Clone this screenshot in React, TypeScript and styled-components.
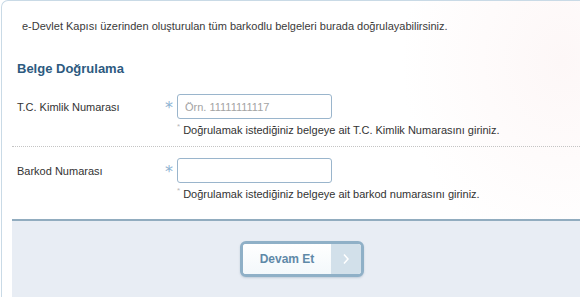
import React from "react";
import styled, { createGlobalStyle } from "styled-components";

const Global = createGlobalStyle`
  html, body { margin: 0; padding: 0; background: #fff; overflow: hidden; }
  body { font-family: Tahoma, "DejaVu Sans", "Liberation Sans", sans-serif; }
`;

const Panel = styled.div`
  margin-left: 1px;
  width: 579px;
  height: 297px;
  box-sizing: border-box;
  border: 1px solid #c9dae6;
  border-right: none;
  border-bottom: none;
  border-top-left-radius: 7px;
  background: radial-gradient(ellipse 160px 200px at 560px 60px, #fdf7f7 0%, rgba(255,255,255,0) 100%), #fff;
  display: flex;
  flex-direction: column;
`;

const Intro = styled.p`
  margin: 17px 0 0 20px;
  font-family: "Liberation Sans", Arial, sans-serif;
  font-size: 11px;
  line-height: 16px;
  color: #3a3a3a;
`;

const Title = styled.h2`
  margin: 26px 0 0 15px;
  font-family: "Liberation Sans", Arial, sans-serif;
  font-size: 13px;
  font-weight: bold;
  line-height: 18px;
  color: #2d5a7f;
`;

const Row = styled.div<{ $last?: boolean }>`
  display: grid;
  grid-template-columns: 148px 12px 160px;
  align-items: center;
  margin-left: 10px;
  padding: ${p => (p.$last ? "11px 0 17px 5px" : "16px 0 8px 5px")};
  border-bottom: ${p => (p.$last ? "none" : "1px dotted #c4c4c4")};
  row-gap: 3px;
`;

const Label = styled.label`
  font-family: "Liberation Sans", Arial, sans-serif;
  font-size: 11px;
  color: #333;
`;

const Star = styled.span`
  font-family: "DejaVu Sans", sans-serif;
  font-size: 16px;
  color: #8eb3d2;
  line-height: 1;
  text-align: left;
  padding-top: 2px;
`;

const Input = styled.input`
  box-sizing: border-box;
  width: 155px;
  height: 25px;
  border: 1px solid #9ab5cc;
  border-radius: 3px;
  padding: 0 7px;
  font-family: "Liberation Sans", Arial, sans-serif;
  font-size: 11px;
  color: #333;
  background: #fff;
  outline: none;
  &::placeholder { color: #a3a3a3; }
`;

const Hint = styled.div`
  grid-column: 3;
  white-space: nowrap;
  font-family: "Liberation Sans", Arial, sans-serif;
  font-size: 11px;
  line-height: 16px;
  color: #333;
  display: flex;
  align-items: flex-start;
`;

const HintMark = styled.span`
  font-size: 8px;
  color: #b8b8b8;
  margin-right: 3px;
  line-height: 10px;
`;

const Footer = styled.div`
  margin-left: 10px;
  flex: 1;
  border-top: 2px solid #91acbf;
  background: #e8edf4;
  padding: 20px 0 0 228px;
`;

const Button = styled.button`
  display: flex;
  align-items: stretch;
  padding: 0;
  width: 124px;
  height: 36px;
  box-sizing: border-box;
  border: 3px solid #8fb0c7;
  border-radius: 6px;
  overflow: hidden;
  background: #fff;
  cursor: pointer;
  box-shadow: 0 1px 2px rgba(80, 110, 140, 0.25);
`;

const ButtonText = styled.span`
  flex: 1;
  display: flex;
  align-items: center;
  justify-content: center;
  background: linear-gradient(180deg, #ffffff 0%, #f3f8fb 100%);
  font-family: "Liberation Sans", Arial, sans-serif;
  font-weight: bold;
  font-size: 12px;
  color: #5f89a8;
`;

const ButtonArrow = styled.span`
  width: 30px;
  display: flex;
  align-items: center;
  justify-content: center;
  background: #d2e0ea;
`;

export default function App() {
  return (
    <>
      <Global />
      <Panel>
        <Intro>e-Devlet Kapısı üzerinden oluşturulan tüm barkodlu belgeleri burada doğrulayabilirsiniz.</Intro>
        <Title>Belge Doğrulama</Title>
        <Row>
          <Label>T.C. Kimlik Numarası</Label>
          <Star>*</Star>
          <Input placeholder="Örn. 11111111117" />
          <Hint>
            <HintMark>*</HintMark>Doğrulamak istediğiniz belgeye ait T.C. Kimlik Numarasını giriniz.
          </Hint>
        </Row>
        <Row $last>
          <Label>Barkod Numarası</Label>
          <Star>*</Star>
          <Input />
          <Hint>
            <HintMark>*</HintMark>Doğrulamak istediğiniz belgeye ait barkod numarasını giriniz.
          </Hint>
        </Row>
        <Footer>
          <Button>
            <ButtonText>Devam Et</ButtonText>
            <ButtonArrow>
              <svg width="8" height="12" viewBox="0 0 8 12">
                <path d="M2 1.5 L6 6 L2 10.5" fill="none" stroke="#fff" strokeWidth="1.5" />
              </svg>
            </ButtonArrow>
          </Button>
        </Footer>
      </Panel>
    </>
  );
}
